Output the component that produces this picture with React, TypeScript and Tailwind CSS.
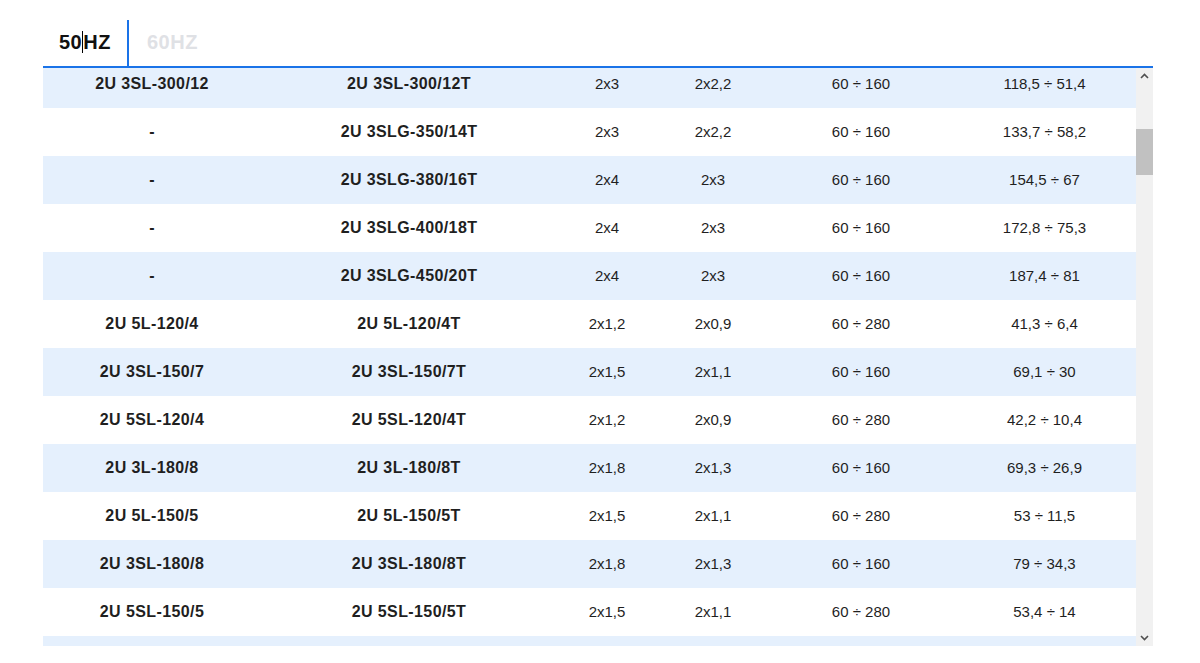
import React from 'react';

type Row = [string, string, string, string, string, string];

const rows: Row[] = [
  ['2U 3SL-300/12', '2U 3SL-300/12T', '2x3', '2x2,2', '60 ÷ 160', '118,5 ÷ 51,4'],
  ['-', '2U 3SLG-350/14T', '2x3', '2x2,2', '60 ÷ 160', '133,7 ÷ 58,2'],
  ['-', '2U 3SLG-380/16T', '2x4', '2x3', '60 ÷ 160', '154,5 ÷ 67'],
  ['-', '2U 3SLG-400/18T', '2x4', '2x3', '60 ÷ 160', '172,8 ÷ 75,3'],
  ['-', '2U 3SLG-450/20T', '2x4', '2x3', '60 ÷ 160', '187,4 ÷ 81'],
  ['2U 5L-120/4', '2U 5L-120/4T', '2x1,2', '2x0,9', '60 ÷ 280', '41,3 ÷ 6,4'],
  ['2U 3SL-150/7', '2U 3SL-150/7T', '2x1,5', '2x1,1', '60 ÷ 160', '69,1 ÷ 30'],
  ['2U 5SL-120/4', '2U 5SL-120/4T', '2x1,2', '2x0,9', '60 ÷ 280', '42,2 ÷ 10,4'],
  ['2U 3L-180/8', '2U 3L-180/8T', '2x1,8', '2x1,3', '60 ÷ 160', '69,3 ÷ 26,9'],
  ['2U 5L-150/5', '2U 5L-150/5T', '2x1,5', '2x1,1', '60 ÷ 280', '53 ÷ 11,5'],
  ['2U 3SL-180/8', '2U 3SL-180/8T', '2x1,8', '2x1,3', '60 ÷ 160', '79 ÷ 34,3'],
  ['2U 5SL-150/5', '2U 5SL-150/5T', '2x1,5', '2x1,1', '60 ÷ 280', '53,4 ÷ 14'],
];

export default function App() {
  return (
    <div className="w-[1200px] h-[663px] overflow-hidden bg-white pt-5 pl-[43px] font-['Liberation_Sans',Arial,sans-serif] text-[#1f1f1f]">
      <div className="w-[1110px]">
        {/* tabs */}
        <div className="flex h-[48px] border-b-2 border-[#1a73e8]">
          <div className="w-[86px] border-r-2 border-[#1a73e8] flex items-center pl-4 pb-0.5 text-[20px] tracking-[0.5px] font-bold text-[#111]">
            50<span className="inline-block w-px h-[22px] bg-black" />HZ
          </div>
          <div className="flex items-center pl-[18px] pb-0.5 text-[20px] tracking-[0.5px] font-bold text-[#dfe1e5]">60HZ</div>
        </div>

        {/* table */}
        <div className="flex h-[578px]">
          <div className="w-[1093px] overflow-hidden">
            <div className="-mt-2">
              {rows.map((r, i) => (
                <div
                  key={i}
                  className={`grid grid-cols-[218px_296px_100px_112px_184px_183px] h-12 items-center text-center text-[15px] ${
                    i % 2 === 0 ? 'bg-[#e5f0fd]' : 'bg-white'
                  }`}
                >
                  <div className="font-bold text-[16px] tracking-[0.4px]">{r[0]}</div>
                  <div className="font-bold text-[16px] tracking-[0.4px]">{r[1]}</div>
                  <div>{r[2]}</div>
                  <div>{r[3]}</div>
                  <div>{r[4]}</div>
                  <div>{r[5]}</div>
                </div>
              ))}
              <div className="h-12 bg-[#e5f0fd]" />
            </div>
          </div>
          {/* scrollbar */}
          <div className="w-[17px] bg-[#f1f1f1] flex flex-col items-center justify-between">
            <svg width="17" height="17" viewBox="0 0 17 17" className="shrink-0">
              <path d="M5 10 L8.5 6.5 L12 10" fill="none" stroke="#505050" strokeWidth="1.6" />
            </svg>
            <div className="flex-1 w-full">
              <div className="mt-[44px] h-[46px] w-full bg-[#c1c1c1]" />
            </div>
            <svg width="17" height="17" viewBox="0 0 17 17" className="shrink-0">
              <path d="M5 7 L8.5 10.5 L12 7" fill="none" stroke="#505050" strokeWidth="1.6" />
            </svg>
          </div>
        </div>
      </div>
    </div>
  );
}
